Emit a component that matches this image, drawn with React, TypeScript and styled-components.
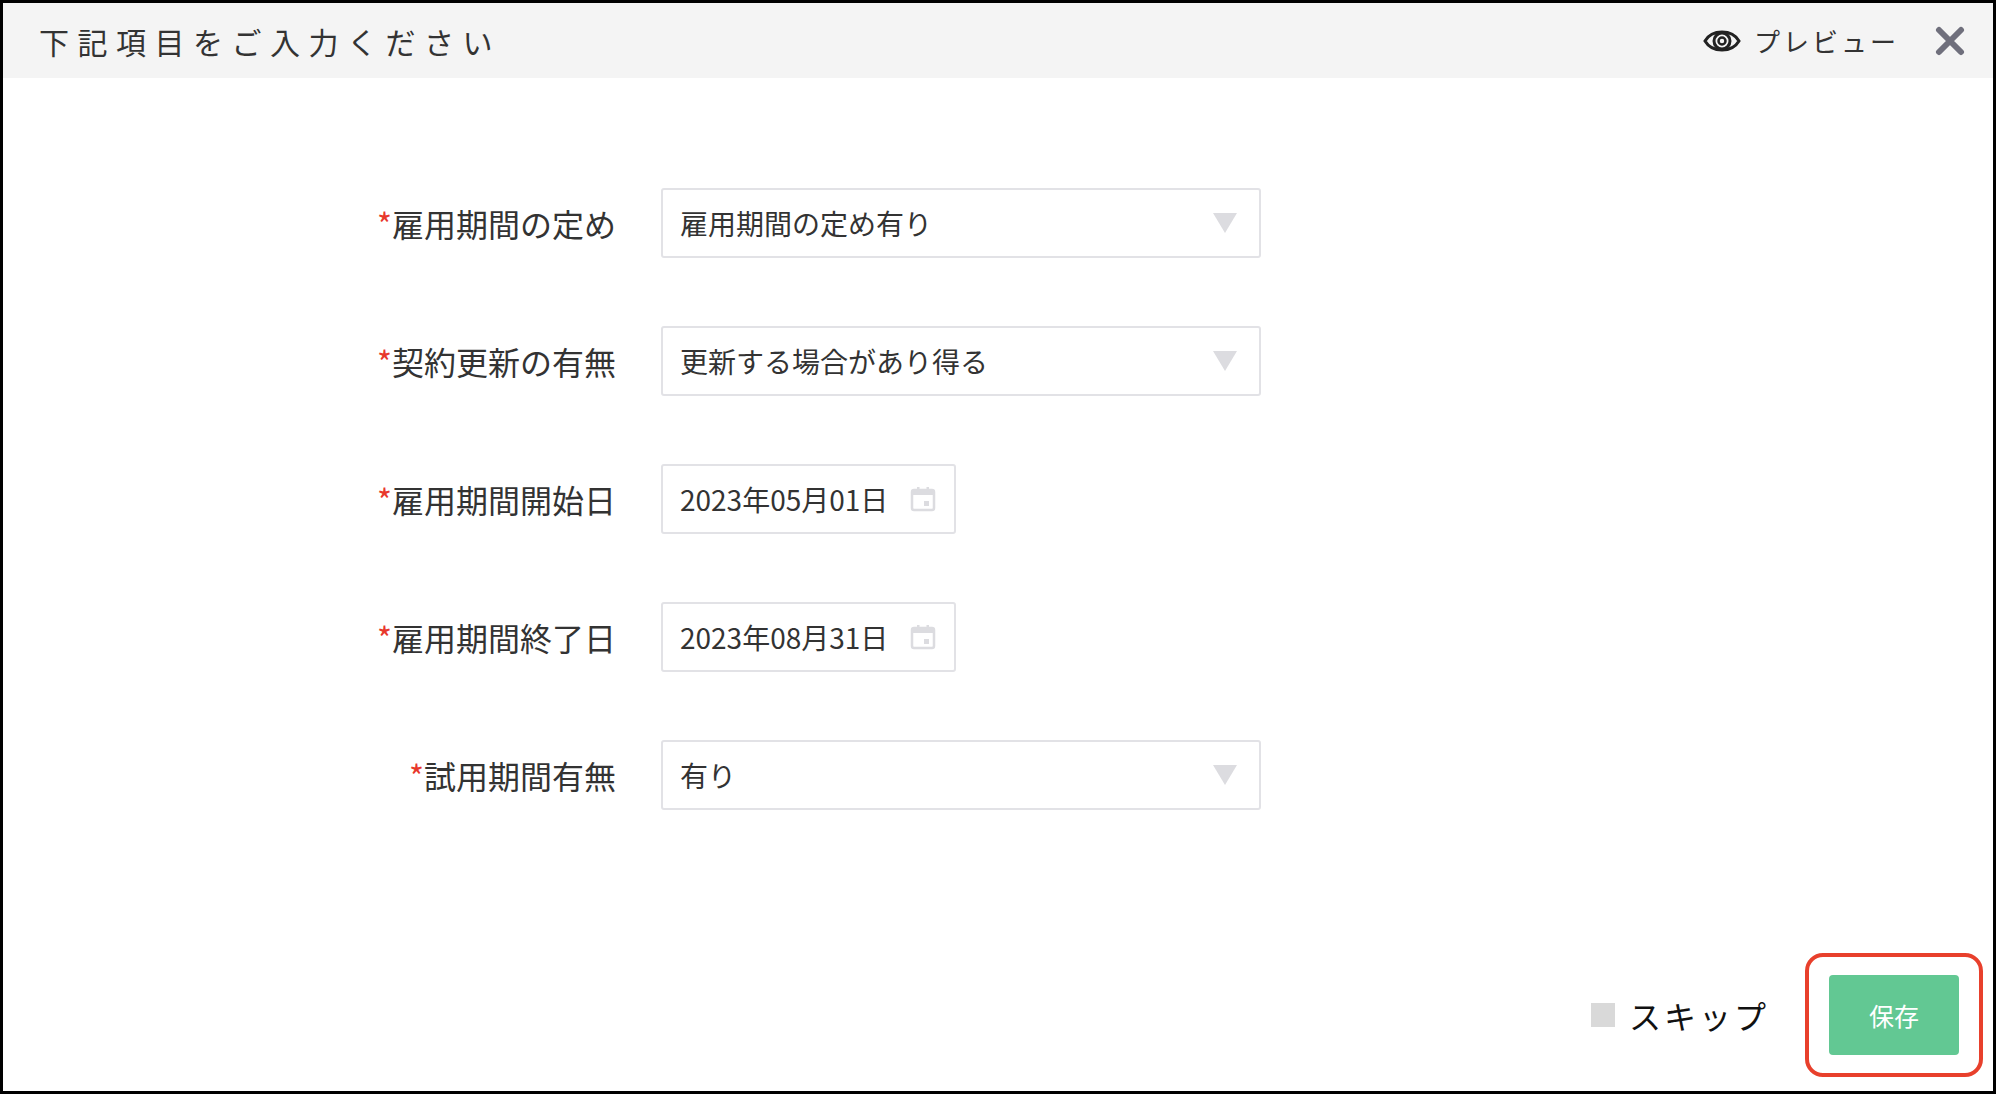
import React from "react";
import styled, { createGlobalStyle } from "styled-components";

const Global = createGlobalStyle`
  html, body { margin: 0; padding: 0; background: #fff; }
  body { font-family: "Noto Sans CJK JP", "Noto Sans", sans-serif; }
`;

const Frame = styled.div`
  box-sizing: border-box;
  width: 1996px;
  height: 1094px;
  border: 3px solid #000;
  display: flex;
  flex-direction: column;
`;

const Header = styled.div`
  height: 75px;
  background: #f4f4f4;
  display: flex;
  align-items: center;
  padding: 0 28px 0 36px;
`;

const Title = styled.div`
  flex: 1;
  font-size: 30px;
  letter-spacing: 8.5px;
  color: #333;
`;

const Preview = styled.div`
  display: flex;
  align-items: center;
  gap: 12px;
  font-size: 26px;
  color: #333;
  letter-spacing: 3px;
  margin-right: 36px;
`;

const Body = styled.div`
  flex: 1;
  display: flex;
  flex-direction: column;
  padding: 110px 0 0 0;
`;

const Row = styled.div`
  display: flex;
  align-items: center;
  height: 70px;
  margin-bottom: 68px;
`;

const Label = styled.div`
  width: 658px;
  text-align: right;
  font-size: 32px;
  color: #333;
  padding-right: 45px;
  box-sizing: border-box;
`;

const Req = styled.span`
  color: #e8382c;
`;

const Field = styled.div<{ $w: number }>`
  box-sizing: border-box;
  width: ${(p) => p.$w}px;
  height: 70px;
  border: 2px solid #e2e2e6;
  border-radius: 3px;
  display: flex;
  align-items: center;
  padding: 0 18px 0 17px;
  font-size: 28px;
  color: #333;
`;

const Value = styled.div`
  flex: 1;
`;

const Arrow = styled.div`
  width: 0;
  height: 0;
  border-left: 12px solid transparent;
  border-right: 12px solid transparent;
  border-top: 20px solid #dcdce0;
  margin-right: 4px;
`;

const Footer = styled.div`
  display: flex;
  justify-content: flex-end;
  align-items: center;
  padding: 0 24px 26px 0;
  margin-top: auto;
`;

const Skip = styled.label`
  display: flex;
  align-items: center;
  gap: 14px;
  font-size: 32px;
  color: #111;
  margin-right: 50px;
  letter-spacing: 3px;
`;

const Box = styled.span`
  width: 24px;
  height: 24px;
  background: #d9d9d9;
`;

const SaveWrap = styled.div`
  position: relative;
  padding: 10px;
`;

const Outline = styled.div`
  position: absolute;
  inset: -12px -14px -12px -14px;
  border: 4px solid #e8402c;
  border-radius: 18px;
  pointer-events: none;
`;

const Save = styled.button`
  width: 130px;
  height: 80px;
  border: none;
  border-radius: 4px;
  background: #62c893;
  color: #fff;
  font-size: 25px;
  font-family: inherit;
`;

const Cal = () => (
  <svg width="26" height="26" viewBox="0 0 26 26">
    <rect x="2" y="4" width="22" height="20" rx="2" fill="none" stroke="#dcdce0" strokeWidth="2.5" />
    <rect x="2" y="4" width="22" height="5" fill="#dcdce0" />
    <rect x="7" y="1" width="2.5" height="5" fill="#dcdce0" />
    <rect x="16.5" y="1" width="2.5" height="5" fill="#dcdce0" />
    <rect x="14" y="15" width="5" height="5" fill="#dcdce0" />
  </svg>
);

const rows: { label: string; value: string; date?: boolean }[] = [
  { label: "雇用期間の定め", value: "雇用期間の定め有り" },
  { label: "契約更新の有無", value: "更新する場合があり得る" },
  { label: "雇用期間開始日", value: "2023年05月01日", date: true },
  { label: "雇用期間終了日", value: "2023年08月31日", date: true },
  { label: "試用期間有無", value: "有り" },
];

export default function App() {
  return (
    <>
      <Global />
      <Frame>
        <Header>
          <Title>下記項目をご入力ください</Title>
          <Preview>
            <svg width="40" height="30" viewBox="0 0 40 30">
              <path d="M3 15 C10 3 30 3 37 15 C30 27 10 27 3 15 Z" fill="none" stroke="#222" strokeWidth="3" />
              <circle cx="20" cy="15" r="8" fill="none" stroke="#222" strokeWidth="3" />
              <circle cx="20" cy="15" r="3.5" fill="none" stroke="#222" strokeWidth="2.5" />
            </svg>
            プレビュー
          </Preview>
          <svg width="30" height="30" viewBox="0 0 30 30">
            <path d="M4 4 L26 26 M26 4 L4 26" stroke="#6f6f7c" strokeWidth="6" strokeLinecap="round" />
          </svg>
        </Header>
        <Body>
          {rows.map((r) => (
            <Row key={r.label}>
              <Label>
                <Req>*</Req>
                {r.label}
              </Label>
              <Field $w={r.date ? 295 : 600}>
                <Value>{r.value}</Value>
                {r.date ? <Cal /> : <Arrow />}
              </Field>
            </Row>
          ))}
          <Footer>
            <Skip>
              <Box />
              スキップ
            </Skip>
            <SaveWrap>
              <Outline />
              <Save>保存</Save>
            </SaveWrap>
          </Footer>
        </Body>
      </Frame>
    </>
  );
}
